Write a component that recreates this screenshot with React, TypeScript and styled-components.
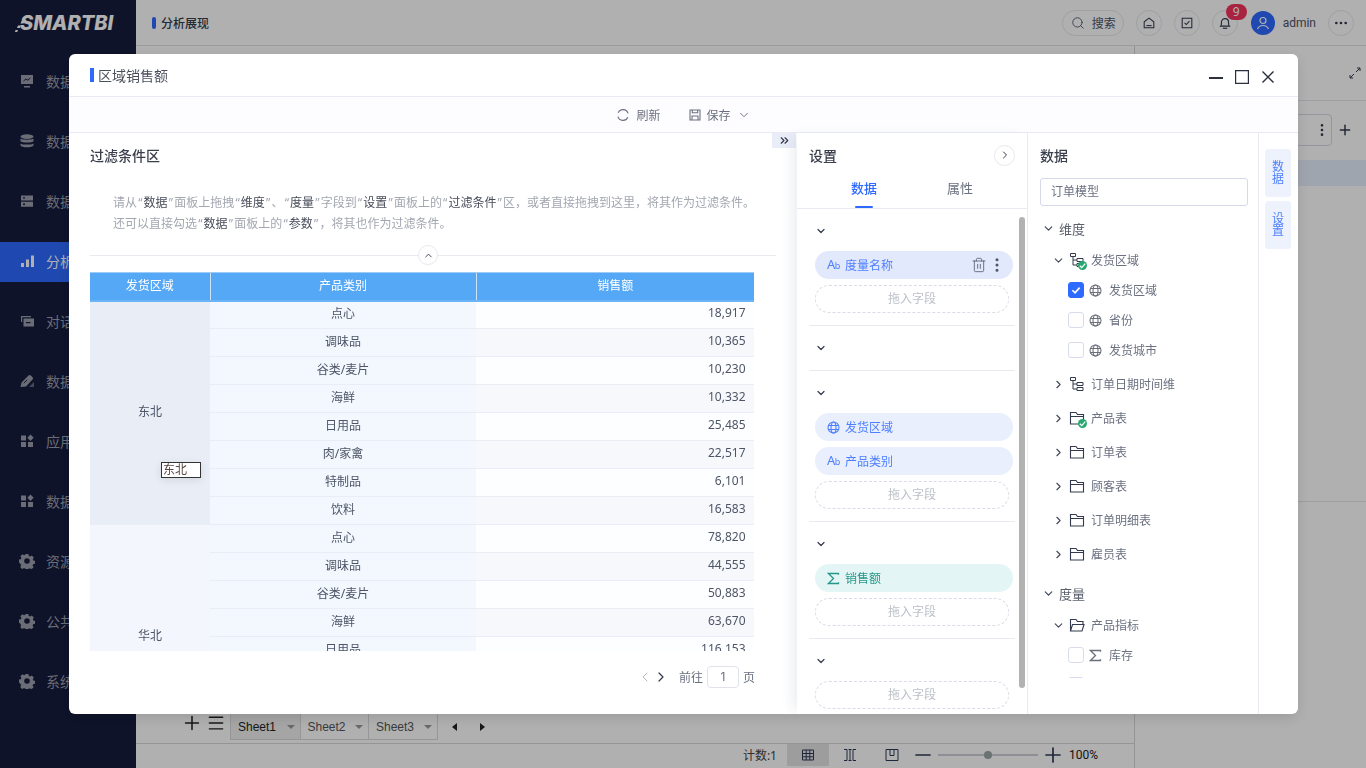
import React from 'react';
import styled, { createGlobalStyle } from 'styled-components';
import { ChevronDown, ChevronRight, ChevronLeft, ChevronUp, ChevronsRight, Search, Plus, Minus, Ellipsis, EllipsisVertical, Trash2, Menu } from 'lucide-react';

const GlobalStyle = createGlobalStyle`
  html, body {
    margin: 0;
    height: 100%;
    overflow: hidden;
  }
  body {
    font-family: "Noto Sans", "Noto Sans CJK SC", sans-serif;
    font-size: 12px;
    color: #4d5566;
    background: #fff;
  }
  #root {
    height: 100%;
  }
  * {
    box-sizing: border-box;
  }
`;

const Shell = styled.div`
  display: flex;
  height: 768px;
  width: 1366px;
  overflow: hidden;
`;

const Sidebar = styled.nav`
  width: 136px;
  flex: none;
  background: #161c3d;
  display: flex;
  flex-direction: column;
`;

const LogoBox = styled.div`
  height: 62px;
  display: flex;
  align-items: flex-start;
  padding: 12px 0 0 15px;
`;

const LogoText = styled.span`
  font-family: Inter, sans-serif;
  font-style: italic;
  font-weight: 800;
  font-size: 20px;
  line-height: 22px;
  color: #fff;
  margin-left: -5px;
`;

const NavList = styled.div`
  display: flex;
  flex-direction: column;
  gap: 20px;
`;

const NavItem = styled.div<{ $active?: boolean }>`
  height: 40px;
  display: flex;
  align-items: center;
  gap: 11px;
  padding: 0 0 2px 19px;
  font-size: 14px;
  white-space: nowrap;
  color: ${p => (p.$active ? '#fff' : '#9a9eab')};
  background: ${p => (p.$active ? '#2e6aff' : 'transparent')};
`;

const Main = styled.div`
  flex: 1;
  display: flex;
  flex-direction: column;
  min-width: 0;
`;

const TopBar = styled.header`
  height: 46px;
  flex: none;
  display: flex;
  align-items: center;
  padding: 0 0 0 16px;
  border-bottom: 1px solid #dfe1e6;
`;

const TopTitle = styled.div`
  display: flex;
  align-items: center;
  gap: 5px;
  font-weight: 500;
  color: #333a4d;
  flex: 1;
  &::before {
    content: '';
    width: 4px;
    height: 12px;
    border-radius: 2px;
    background: #2e6aff;
  }
`;

const TopActions = styled.div`
  display: flex;
  align-items: center;
`;

const SearchPill = styled.div`
  width: 62px;
  height: 26px;
  border: 1px solid #e6e8ee;
  border-radius: 13px;
  display: flex;
  align-items: center;
  gap: 7px;
  padding-left: 8px;
  color: #4d5566;
  margin-right: 12px;
`;

const RoundBtn = styled.div`
  width: 26px;
  height: 26px;
  border: 1px solid #e6e8ee;
  border-radius: 50%;
  display: flex;
  align-items: center;
  justify-content: center;
  color: #333a4d;
  margin-right: 12px;
  position: relative;
`;

const Badge = styled.span`
  position: absolute;
  left: 13px;
  top: -7px;
  width: 21px;
  height: 16px;
  border-radius: 8px;
  background: #f5325c;
  color: #fff;
  font-size: 12px;
  line-height: 16px;
  text-align: center;
`;

const Avatar = styled.div`
  width: 24px;
  height: 24px;
  border-radius: 50%;
  background: #2e6aff;
  color: #fff;
  display: flex;
  align-items: center;
  justify-content: center;
  margin-left: 1px;
  margin-right: 8px;
`;

const UserName = styled.span`
  font-family: Roboto, sans-serif;
  font-size: 12px;
  color: #4d5566;
  margin-right: 12px;
`;

const Work = styled.div`
  flex: 1;
  display: flex;
  min-height: 0;
`;

const Center = styled.div`
  flex: 1;
  display: flex;
  flex-direction: column;
  min-width: 0;
`;

const Canvas = styled.div`
  flex: 1;
`;

const SheetBar = styled.div`
  height: 30px;
  flex: none;
  display: flex;
  align-items: flex-start;
  padding-left: 45px;
  border-bottom: 1px solid #d8d8d8;
  color: #222;
`;

const SheetTools = styled.div`
  display: flex;
  align-items: center;
  gap: 3px;
  height: 18px;
  margin-right: 4px;
`;

const SheetTabs = styled.div`
  display: flex;
  height: 26px;
  border: 1px solid #dadada;
  border-top: none;
`;

const SheetTab = styled.div<{ $active?: boolean }>`
  width: 68.5px;
  display: flex;
  align-items: center;
  justify-content: space-between;
  padding: 0 5px 0 7px;
  font-family: "Liberation Sans", Arial, sans-serif;
  font-size: 12px;
  color: ${p => (p.$active ? '#222' : '#555')};
  background: ${p => (p.$active ? '#f0f0f0' : 'transparent')};
  & + & {
    border-left: 1px solid #dadada;
  }
  &::after {
    content: '';
    border-left: 4px solid transparent;
    border-right: 4px solid transparent;
    border-top: 4px solid #999;
  }
`;

const SheetArrows = styled.div`
  display: flex;
  align-items: center;
  gap: 23px;
  height: 26px;
  margin-left: 14px;
`;

const Arrow = styled.span<{ $dir: 'left' | 'right' }>`
  width: 0;
  height: 0;
  border-top: 4px solid transparent;
  border-bottom: 4px solid transparent;
  ${p => (p.$dir === 'left' ? 'border-right: 5px solid #222;' : 'border-left: 5px solid #222;')}
`;

const StatusBar = styled.div`
  height: 24px;
  flex: none;
  display: flex;
  align-items: center;
  justify-content: flex-end;
  color: #444;
  padding: 0 36px 2px 0;
`;

const CountLabel = styled.span`
  margin-right: 10px;
`;

const ViewBtn = styled.div<{ $active?: boolean }>`
  width: 42px;
  height: 22px;
  align-self: flex-start;
  display: flex;
  align-items: center;
  justify-content: center;
  background: ${p => (p.$active ? '#e4e4e4' : 'transparent')};
  color: #2d3a55;
`;

const ZoomOut = styled(Minus)`
  flex: none;
  margin-left: -2px;
`;

const ZoomTrack = styled.div`
  width: 100px;
  height: 2px;
  background: #ccd0d8;
  margin: 0 3px;
  display: flex;
  align-items: center;
  justify-content: center;
  &::after {
    content: '';
    width: 8px;
    height: 8px;
    border-radius: 50%;
    background: #9aa5a5;
    flex: none;
  }
`;

const ZoomValue = styled.span`
  font-family: Roboto, sans-serif;
  margin-left: 4px;
  color: #222;
`;

const SidePanel = styled.aside`
  width: 232px;
  flex: none;
  border-left: 1px solid #d8d8d8;
  display: flex;
  flex-direction: column;
  align-items: stretch;
  color: #333a4d;
`;

const SideHead = styled.div`
  height: 55px;
  border-bottom: 1px solid #e4e6ec;
  display: flex;
  align-items: center;
  justify-content: flex-end;
  padding-right: 5px;
`;

const SideInputRow = styled.div`
  display: flex;
  align-items: center;
  margin-top: 13px;
  padding-right: 13px;
  gap: 5px;
`;

const SideInput = styled.div`
  flex: 1;
  height: 32px;
  border: 1px solid #d5d9e4;
  border-radius: 4px;
  display: flex;
  align-items: center;
  justify-content: flex-end;
  padding-right: 1px;
`;

const SideRow = styled.div`
  height: 26px;
  margin-top: 14px;
  background: #e7effe;
  border-radius: 4px 0 0 4px;
`;

const SideRule = styled.div`
  margin-top: 315px;
  height: 1px;
  background: #e4e6ec;
`;

const Overlay = styled.div`
  position: fixed;
  inset: 0;
  background: rgba(0, 0, 0, 0.31);
`;

const Dialog = styled.section`
  position: absolute;
  left: 69px;
  top: 54px;
  width: 1229px;
  height: 660px;
  background: #fff;
  border-radius: 6px;
  box-shadow: 0 4px 14px rgba(0, 0, 0, 0.12);
  display: flex;
  flex-direction: column;
  overflow: hidden;
`;

const DialogHead = styled.div`
  height: 43px;
  flex: none;
  border-bottom: 1px solid #e8ebf3;
  display: flex;
  align-items: center;
  padding: 0 24px 0 21px;
`;

const DialogTitle = styled.div`
  flex: 1;
  display: flex;
  align-items: center;
  gap: 4px;
  font-size: 14px;
  color: #4a4f5c;
  &::before {
    content: '';
    width: 4px;
    height: 14px;
    background: #2e6aff;
  }
`;

const WindowBtns = styled.div`
  display: flex;
  align-items: center;
  gap: 12px;
  margin-top: 3px;
  color: #2b2f3e;
  svg {
    display: block;
  }
  svg:last-child {
    margin-left: 1px;
  }
`;

const DialogTools = styled.div`
  height: 36px;
  flex: none;
  border-bottom: 1px solid #e8ebf3;
  display: flex;
  align-items: center;
  justify-content: center;
  gap: 28px;
  background: #fdfdff;
`;

const ToolBtn = styled.div`
  display: flex;
  align-items: center;
  gap: 6px;
  color: #6b7180;
`;

const DialogBody = styled.div`
  flex: 1;
  display: flex;
  min-height: 0;
`;

const FilterArea = styled.div`
  width: 728px;
  flex: none;
  padding: 0 21px;
  position: relative;
  display: flex;
  flex-direction: column;
`;

const CollapseTab = styled.div`
  position: absolute;
  right: 1px;
  top: 0;
  width: 24px;
  height: 15px;
  background: #e9edf8;
  display: flex;
  align-items: center;
  justify-content: center;
  color: #333a4d;
`;

const AreaTitle = styled.h3`
  margin: 0;
  height: 46px;
  line-height: 46px;
  font-size: 14px;
  font-weight: 500;
  color: #3a3f4c;
`;

const Hint = styled.p`
  margin: 13px 0 0;
  padding-left: 23px;
  line-height: 21px;
  color: #a3a7b0;
  white-space: nowrap;
`;

const Quoted = styled.span`
  padding: 0 1.2px;
  b {
    font-weight: 400;
    color: #474c59;
    padding: 0 1.1px;
  }
`;

const FoldRule = styled.div`
  margin-top: 21px;
  height: 1px;
  background: #e8eaef;
  position: relative;
  display: flex;
  justify-content: center;
`;

const FoldBtn = styled.div`
  position: absolute;
  top: -10px;
  left: 328px;
  width: 20px;
  height: 20px;
  border: 1px solid #e6e8ee;
  border-radius: 50%;
  background: #fff;
  display: flex;
  align-items: center;
  justify-content: center;
  color: #333a4d;
`;

const TableBox = styled.div`
  margin-top: 16px;
  width: 664px;
  height: 379px;
  overflow: hidden;
  position: relative;
`;

const Grid = styled.table`
  width: 664px;
  table-layout: fixed;
  border-collapse: collapse;
`;

const Head = styled.th<{ $w: number }>`
  width: ${p => p.$w}px;
  height: 28px;
  padding: 0 0 2px;
  background: #55a8f5;
  color: #fff;
  font-weight: 400;
  border-left: 1px solid #cfe4fb;
  border-top: 1px solid #9ccbf8;
  border-bottom: 2px solid #6db4f6;
  &:first-child {
    border-left: none;
  }
`;

const AreaCell = styled.td<{ $tone: string }>`
  padding: 0 0 4px;
  text-align: center;
  background: ${p => p.$tone};
  border-bottom: 1px solid #e9edf5;
`;

const KindCell = styled.td`
  height: 28px;
  padding: 0 0 4px;
  text-align: center;
  background: #f3f7fe;
  border-bottom: 1px solid #e9edf5;
`;

const ValueCell = styled.td<{ $odd: boolean }>`
  padding: 0 8.5px 4px 0;
  text-align: right;
  background: ${p => (p.$odd ? '#f6f8fc' : '#fdfeff')};
  border-bottom: 1px solid #e9edf5;
`;

const CellEditor = styled.div`
  position: absolute;
  left: 71px;
  top: 190px;
  width: 40px;
  height: 16px;
  background: #fff;
  border: 1px solid #333;
  line-height: 14px;
  padding-left: 1px;
  color: #5a4a46;
  box-shadow: 0 2px 8px rgba(0, 0, 0, 0.1);
`;

const Pager = styled.div`
  width: 665px;
  height: 22px;
  margin-top: 15px;
  display: flex;
  align-items: center;
  justify-content: flex-end;
  color: #6b7180;
`;

const PagerArrow = styled.span<{ $off?: boolean }>`
  display: flex;
  color: ${p => (p.$off ? '#b4b8c2' : '#333a4d')};
`;

const PageInput = styled.div`
  width: 32px;
  height: 22px;
  border: 1px solid #e0e3ec;
  border-radius: 4px;
  margin: 0 4px;
  line-height: 20px;
  text-align: center;
  font-family: Inter, sans-serif;
`;

const PagerLabel = styled.span`
  margin-left: 10px;
`;

const Settings = styled.div`
  width: 231px;
  flex: none;
  border-right: 1px solid #e8ebf3;
  display: flex;
  flex-direction: column;
  box-shadow: -8px 0 12px -4px rgba(40, 60, 110, 0.09);
  position: relative;
  background: #fff;
`;

const PanelHead = styled.div`
  height: 46px;
  flex: none;
  display: flex;
  align-items: center;
  justify-content: space-between;
  padding: 0 12px 2px;
  font-size: 14px;
  font-weight: 500;
  color: #3a3f4c;
`;

const CircleBtn = styled.div`
  width: 21px;
  height: 21px;
  border: 1px solid #e6e8ee;
  border-radius: 50%;
  display: flex;
  align-items: center;
  justify-content: center;
  color: #333a4d;
`;

const TabRow = styled.div`
  height: 30px;
  flex: none;
  display: flex;
  border-bottom: 1px solid #e8ebf3;
`;

const PanelTab = styled.div<{ $active?: boolean }>`
  width: 96px;
  margin-left: ${p => (p.$active ? '19px' : '0')};
  text-align: center;
  font-size: 13px;
  line-height: 18px;
  position: relative;
  font-weight: ${p => (p.$active ? 500 : 400)};
  color: ${p => (p.$active ? '#2e6aff' : '#6b7180')};
  &::after {
    content: '';
    display: ${p => (p.$active ? 'block' : 'none')};
    position: absolute;
    left: 39px;
    bottom: 0;
    width: 18px;
    height: 2px;
    border-radius: 1px;
    background: #2e6aff;
  }
`;

const FieldScroll = styled.div`
  flex: 1;
  overflow: hidden;
  position: relative;
  padding: 0 12px;
`;

const Thumb = styled.div`
  position: absolute;
  left: 222px;
  top: 8px;
  width: 6px;
  height: 471px;
  border-radius: 3px;
  background: #b2b2b2;
`;

const Zone = styled.div<{ $empty?: boolean }>`
  border-bottom: 1px solid #e8eaef;
  padding: 0 0 ${p => (p.$empty ? '8px' : '12px')} 6px;
  display: flex;
  flex-direction: column;
  align-items: flex-start;
  gap: 6px;
`;

const ZoneHead = styled.div`
  height: 42px;
  margin-bottom: -6px;
  display: flex;
  align-items: center;
  padding-top: 2px;
  color: #333a4d;
`;

const pillColors = {
  hover: ['#4d7fff', '#e2e9fc'],
  blue: ['#4d7fff', '#e9effd'],
  green: ['#26978a', '#e3f6f5'],
};

const Pill = styled.div<{ $tone?: keyof typeof pillColors }>`
  width: 198px;
  height: 28px;
  flex: none;
  border-radius: 14px;
  padding: 0 7px 0 12px;
  display: flex;
  align-items: center;
  gap: 6px;
  color: ${p => pillColors[p.$tone ?? 'blue'][0]};
  background: ${p => pillColors[p.$tone ?? 'blue'][1]};
  svg {
    display: block;
    flex: none;
  }
`;

const PillLabel = styled.span`
  flex: 1;
`;

const PillTools = styled.div`
  display: flex;
  align-items: center;
  gap: 1px;
  color: #4d5566;
`;

const AbMark = styled.span`
  width: 12px;
  font-size: 13px;
  line-height: 14px;
  letter-spacing: -0.5px;
  white-space: nowrap;
  small {
    font-size: 9px;
  }
`;

const GlobeBox = styled.span`
  width: 12px;
  display: flex;
  justify-content: center;
`;

const DropZone = styled.div`
  width: 194px;
  height: 28px;
  flex: none;
  border: 1px dashed #d9dce8;
  border-radius: 14px;
  line-height: 26px;
  text-align: center;
  color: #bdc0c9;
`;

const DataPanel = styled.div`
  width: 231px;
  flex: none;
  border-right: 1px solid #e8ebf3;
  display: flex;
  flex-direction: column;
`;

const ModelInput = styled.div`
  margin: -1px 10px 0 12px;
  height: 28px;
  flex: none;
  border: 1px solid #d5d9e8;
  border-radius: 3px;
  line-height: 26px;
  padding-left: 10px;
  color: #6b7180;
`;

const Tree = styled.div`
  margin-top: 8px;
  height: 464px;
  overflow: hidden;
  padding-left: 12px;
`;

const TreeRow = styled.div<{ $indent?: number; $h?: number; $gap?: number }>`
  height: ${p => p.$h ?? 30}px;
  margin-top: ${p => p.$gap ?? 0}px;
  padding-left: ${p => p.$indent ?? 0}px;
  display: flex;
  align-items: center;
  color: #6b7180;
  white-space: nowrap;
`;

const RootRow = styled(TreeRow)`
  padding-bottom: 2px;
`;

const Caret = styled.span`
  width: 16px;
  display: flex;
  justify-content: center;
  margin-right: 3px;
  color: #3f4655;
`;

const RootLabel = styled.span`
  font-size: 13px;
  color: #5a5f6c;
`;

const NodeIcon = styled.span`
  width: 16px;
  height: 16px;
  display: flex;
  align-items: center;
  justify-content: center;
  position: relative;
  margin-right: 6px;
  color: #333a4d;
`;

const LeafIcon = styled(NodeIcon)`
  color: #6b6f7a;
`;

const OkDot = styled.span`
  position: absolute;
  right: -2px;
  bottom: -2px;
  width: 9px;
  height: 9px;
  border-radius: 50%;
  background: #27a86f;
  display: flex;
  color: #fff;
`;

const Check = styled.span<{ $on?: boolean }>`
  width: 16px;
  height: 16px;
  flex: none;
  margin-right: 3px;
  border-radius: 3px;
  border: 1px solid ${p => (p.$on ? '#2e6aff' : '#d8dcec')};
  background: ${p => (p.$on ? '#2e6aff' : '#fff')};
  color: #fff;
  display: flex;
  align-items: center;
  justify-content: center;
`;

const Rail = styled.div`
  flex: 1;
  padding: 16px 6px 0;
  display: flex;
  flex-direction: column;
  gap: 4px;
`;

const RailTab = styled.div`
  width: 26px;
  height: 48px;
  background: #edf2fd;
  border-radius: 3px;
  display: flex;
  align-items: center;
  justify-content: center;
  color: #4d7fff;
  text-align: center;
  line-height: 12px;
`;

type IconProps = { size?: number };

const Stroke: React.FC<{ size?: number; box?: number; w?: number; children: React.ReactNode }> = ({ size = 16, box = 16, w = 1.2, children }) => (
  <svg width={size} height={size} viewBox={`0 0 ${box} ${box}`} fill="none" stroke="currentColor" strokeWidth={w}>
    {children}
  </svg>
);

const Fill: React.FC<{ children: React.ReactNode }> = ({ children }) => (
  <svg width={16} height={16} viewBox="0 0 16 16" fill="currentColor">
    {children}
  </svg>
);

const IcoMonitor = () => <Fill><path d="M2 2h12v9H2zM5 13h6v1.4H5z" /><path d="M4.5 8l2.4-2 2 1.2 2.6-2.4" stroke="#161c3d" fill="none" /></Fill>;
const IcoDb = () => <Fill><ellipse cx="8" cy="3.6" rx="6.5" ry="2.4" /><path d="M1.5 5.6c1 1.6 12 1.6 13 0v2.6c-1 1.8-12 1.8-13 0zM1.5 10.4c1 1.6 12 1.6 13 0v2c-1 2.4-12 2.4-13 0z" /></Fill>;
const IcoServer = () => <Fill><path d="M2 2.4h12v5H2zM2 8.8h12v5H2z" /><path d="M4 4.2h2v1.4H4zM4 10.6h2V12H4z" fill="#161c3d" /></Fill>;
const IcoBars = () => <Fill><path d="M2 10h3v4H2zM7 6.5h3V14H7zM12 2.5h3V14h-3z" /></Fill>;
const IcoChat = () => <Fill><path d="M2 3h10v1.2H3.2V9H2z" /><path d="M4.5 5.5H15v8H4.5z" /><path d="M7 9h4.5v1.2H7z" fill="#161c3d" /></Fill>;
const IcoEdit = () => <Fill><path d="M1.5 14l1-4.5L9.5 2.5c.7-.7 1.6-.7 2.3 0l1.7 1.7c.7.7.7 1.6 0 2.3L7 13.5z" /><path d="M4.8 10.2l3.4-3.4" stroke="#161c3d" fill="none" /><path d="M10 14l5-5v5z" opacity=".6" /></Fill>;
const IcoApps = () => <Fill><path d="M2 2.5h5v5H2zM2 9h5v5H2zM9 9h5v5H9zM11.5 1.5l3.2 3.2-3.2 3.2-3.2-3.2z" /></Fill>;
const IcoGear = () => <Fill><path fillRule="evenodd" d="M6.6 1h2.8l.4 1.9 1.3.6 1.7-1 2 2-1 1.7.6 1.4 1.6.4v2.8l-1.9.4-.5 1.3 1 1.7-2 2-1.7-1-1.3.5-.5 1.8H6.6l-.4-1.9-1.3-.5-1.7 1-2-2 1-1.7-.6-1.4L0 9.4V6.6l1.9-.4.5-1.3-1-1.7 2-2 1.7 1 1.4-.6zM8 5.2a2.8 2.8 0 100 5.6 2.8 2.8 0 000-5.6z" /></Fill>;

const IcoHome: React.FC<IconProps> = () => <Stroke size={14}><path d="M2.5 13.5V6.6L8 2.4l5.5 4.2v6.9z" /><path d="M5 11h6" /></Stroke>;
const IcoTask: React.FC<IconProps> = () => <Stroke size={14}><path d="M2.5 2.500h11v11h-11z" /><path d="M5.200 7.800l2 2 3.600-4" /></Stroke>;
const IcoBell: React.FC<IconProps> = () => <Stroke size={14} w={1.3}><path d="M3 11.500c1-1 1-2.500 1-4.500 0-2.500 1.800-4 4-4s4 1.500 4 4c0 2 0 3.500 1 4.500z" /><path d="M5.500 14h5" /></Stroke>;
const IcoUser: React.FC<IconProps> = () => <Stroke size={18} box={18} w={1.2}><circle cx="9" cy="6.500" r="3" /><path d="M3.500 15c1-2.500 3-3.500 5.500-3.500s4.500 1 5.500 3.500" /></Stroke>;
const IcoExpand = () => <Stroke size={12} box={12} w={1}><path d="M7 5l4-4M8 1h3v3M5 7l-4 4M1 8v3h3" /></Stroke>;
const IcoRefresh = () => <Stroke size={14} w={1.3}><path d="M2.500 5.500A6 6 0 0113.800 6.200M13.500 10.500A6 6 0 012.200 9.800" /></Stroke>;
const IcoSave = () => <Stroke size={12} box={12} w={1.1}><path d="M1 1h10v10H1zM3.300 1v2.800h5.400V1M3 11V7h6v4" /></Stroke>;
const IcoGrid = () => <Stroke size={14} box={14} w={1}><path d="M1.500 2h11v10h-11zM1.500 5.500h11M1.500 8.800h11M5.200 2v10M8.800 2v10" /></Stroke>;
const IcoFreeze = () => <Stroke size={14} box={14} w={1}><path d="M1 1.500h3v11H1M13 1.500h-3v11h3M7 1v12M5.500 1.500h3M5.500 12.500h3" /></Stroke>;
const IcoSplit = () => <Stroke size={14} box={14} w={1}><path d="M1 1.500h12v11H1zM5 1.500v6h4v-6" /></Stroke>;
const IcoHier = () => <Stroke w={1}><path d="M1.500 1.500h5v3h-5zM4 4.500v8.500h4M4 8h4M8 6.500h6v3H8zM8 11.500h6v3H8z" /></Stroke>;
const IcoFolder = () => <Stroke w={1.1}><path d="M1.500 14V2.500h5.500l1.500 2h6V14zM1.500 6.500h13.500" /></Stroke>;
const IcoFolderOpen = () => <Stroke w={1.1}><path d="M1.500 14V2.500h5.500l1.500 2h5.500v3M1.500 14h11.500l2-6.500H3.500z" /></Stroke>;
const IcoGlobe = () => <Stroke size={13} box={13} w={1.1}><circle cx="6.500" cy="6.500" r="5.500" /><ellipse cx="6.500" cy="6.500" rx="2.500" ry="5.500" /><path d="M1 4.500h11M1 8.500h11" /></Stroke>;
const IcoSigma = () => <Stroke size={13} box={13} w={1.3}><path d="M11.500 2.800V1.500H1.500L6.500 6.500l-5 5h10v-1.300" /></Stroke>;
const IcoTick = ({ size = 10 }: IconProps) => <Stroke size={size} box={10} w={1.4}><path d="M2 5.200l2.200 2.200L8 3" /></Stroke>;

const navItems: [string, React.ReactNode][] = [
  ['数据门户', <IcoMonitor />],
  ['数据连接', <IcoDb />],
  ['数据准备', <IcoServer />],
  ['分析展现', <IcoBars />],
  ['对话分析', <IcoChat />],
  ['数据填报', <IcoEdit />],
  ['应用市场', <IcoApps />],
  ['数据挖掘', <IcoApps />],
  ['资源管理', <IcoGear />],
  ['公共设置', <IcoGear />],
  ['系统运维', <IcoGear />],
];

const tableGroups: { area: string; tone: string; rows: [string, string][] }[] = [
  {
    area: '东北',
    tone: '#e9edf6',
    rows: [
      ['点心', '18,917'], ['调味品', '10,365'], ['谷类/麦片', '10,230'], ['海鲜', '10,332'],
      ['日用品', '25,485'], ['肉/家禽', '22,517'], ['特制品', '6,101'], ['饮料', '16,583'],
    ],
  },
  {
    area: '华北',
    tone: '#f3f7fd',
    rows: [
      ['点心', '78,820'], ['调味品', '44,555'], ['谷类/麦片', '50,883'], ['海鲜', '63,670'],
      ['日用品', '116,153'], ['肉/家禽', '98,240'], ['特制品', '30,512'], ['饮料', '71,306'],
    ],
  },
];

const Logo = () => (
  <LogoBox>
    <svg width="10" height="22" viewBox="0 0 10 22" fill="#fff">
      <path d="M6.500 9h3l-1 2.500h-3zM3 13.500h3l-1 2.500H2zM.5 18h2.500l-.8 2H0z" />
    </svg>
    <LogoText>SMARTBI</LogoText>
  </LogoBox>
);

const Background = () => (
  <Shell>
    <Sidebar>
      <Logo />
      <NavList>
        {navItems.map(([label, icon], i) => (
          <NavItem key={label} $active={i === 3}>
            {icon}
            {label}
          </NavItem>
        ))}
      </NavList>
    </Sidebar>
    <Main>
      <TopBar>
        <TopTitle>分析展现</TopTitle>
        <TopActions>
          <SearchPill><Search size={14} strokeWidth={1.5} />搜索</SearchPill>
          <RoundBtn><IcoHome /></RoundBtn>
          <RoundBtn><IcoTask /></RoundBtn>
          <RoundBtn><IcoBell /><Badge>9</Badge></RoundBtn>
          <Avatar><IcoUser /></Avatar>
          <UserName>admin</UserName>
          <RoundBtn><Ellipsis size={16} /></RoundBtn>
        </TopActions>
      </TopBar>
      <Work>
        <Center>
          <Canvas />
          <SheetBar>
            <SheetTools>
              <Plus size={22} strokeWidth={1.7} />
              <Menu size={20} strokeWidth={1.7} />
            </SheetTools>
            <SheetTabs>
              <SheetTab $active>Sheet1</SheetTab>
              <SheetTab>Sheet2</SheetTab>
              <SheetTab>Sheet3</SheetTab>
            </SheetTabs>
            <SheetArrows>
              <Arrow $dir="left" />
              <Arrow $dir="right" />
            </SheetArrows>
          </SheetBar>
          <StatusBar>
            <CountLabel>计数:1</CountLabel>
            <ViewBtn $active><IcoGrid /></ViewBtn>
            <ViewBtn><IcoFreeze /></ViewBtn>
            <ViewBtn><IcoSplit /></ViewBtn>
            <ZoomOut size={24} strokeWidth={1.7} color="#2d3a55" />
            <ZoomTrack />
            <Plus size={24} strokeWidth={1.7} color="#2d3a55" />
            <ZoomValue>100%</ZoomValue>
          </StatusBar>
        </Center>
        <SidePanel>
          <SideHead><IcoExpand /></SideHead>
          <SideInputRow>
            <SideInput><EllipsisVertical size={16} /></SideInput>
            <Plus size={16} strokeWidth={2.2} />
          </SideInputRow>
          <SideRow />
          <SideRule />
        </SidePanel>
      </Work>
    </Main>
  </Shell>
);

const ReportTable = () => (
  <TableBox>
    <Grid>
      <thead>
        <tr>
          <Head $w={120}>发货区域</Head>
          <Head $w={266}>产品类别</Head>
          <Head $w={278}>销售额</Head>
        </tr>
      </thead>
      <tbody>
        {tableGroups.map(group =>
          group.rows.map(([kind, value], i) => (
            <tr key={group.area + kind}>
              {i === 0 && <AreaCell $tone={group.tone} rowSpan={group.rows.length}>{group.area}</AreaCell>}
              <KindCell>{kind}</KindCell>
              <ValueCell $odd={i % 2 === 1}>{value}</ValueCell>
            </tr>
          )),
        )}
      </tbody>
    </Grid>
    <CellEditor>东北</CellEditor>
  </TableBox>
);

const Term: React.FC<{ children: React.ReactNode }> = ({ children }) => (
  <Quoted>“<b>{children}</b>”</Quoted>
);

const FilterCanvas = () => (
  <FilterArea>
    <CollapseTab><ChevronsRight size={13} strokeWidth={2.2} /></CollapseTab>
    <AreaTitle>过滤条件区</AreaTitle>
    <Hint>
      请从<Term>数据</Term>面板上拖拽<Term>维度</Term>、<Term>度量</Term>字段到<Term>设置</Term>面板上的<Term>过滤条件</Term>区，或者直接拖拽到这里，将其作为过滤条件。
      <br />
      还可以直接勾选<Term>数据</Term>面板上的<Term>参数</Term>，将其也作为过滤条件。
    </Hint>
    <FoldRule>
      <FoldBtn><ChevronUp size={11} strokeWidth={2} /></FoldBtn>
    </FoldRule>
    <ReportTable />
    <Pager>
      <PagerArrow $off><ChevronLeft size={16} strokeWidth={1.5} /></PagerArrow>
      <PagerArrow><ChevronRight size={16} strokeWidth={1.8} /></PagerArrow>
      <PagerLabel>前往</PagerLabel>
      <PageInput>1</PageInput>
      页
    </Pager>
  </FilterArea>
);

const ZoneCaret = () => (
  <ZoneHead><ChevronDown size={12} strokeWidth={2.4} /></ZoneHead>
);

const Ab = () => <AbMark>A<small>b</small></AbMark>;

const SettingsPanel = () => (
  <Settings>
    <PanelHead>
      设置
      <CircleBtn><ChevronRight size={12} strokeWidth={2} /></CircleBtn>
    </PanelHead>
    <TabRow>
      <PanelTab $active>数据</PanelTab>
      <PanelTab>属性</PanelTab>
    </TabRow>
    <FieldScroll>
      <Zone>
        <ZoneCaret />
        <Pill $tone="hover">
          <Ab />
          <PillLabel>度量名称</PillLabel>
          <PillTools>
            <Trash2 size={16} strokeWidth={1.2} />
            <EllipsisVertical size={18} strokeWidth={2} />
          </PillTools>
        </Pill>
        <DropZone>拖入字段</DropZone>
      </Zone>
      <Zone $empty>
        <ZoneCaret />
      </Zone>
      <Zone>
        <ZoneCaret />
        <Pill><GlobeBox><IcoGlobe /></GlobeBox><PillLabel>发货区域</PillLabel></Pill>
        <Pill><Ab /><PillLabel>产品类别</PillLabel></Pill>
        <DropZone>拖入字段</DropZone>
      </Zone>
      <Zone>
        <ZoneCaret />
        <Pill $tone="green"><GlobeBox><IcoSigma /></GlobeBox><PillLabel>销售额</PillLabel></Pill>
        <DropZone>拖入字段</DropZone>
      </Zone>
      <Zone>
        <ZoneCaret />
        <DropZone>拖入字段</DropZone>
      </Zone>
      <Thumb />
    </FieldScroll>
  </Settings>
);

const Ok = () => <OkDot><IcoTick size={9} /></OkDot>;

const Branch: React.FC<{ label: string; icon: React.ReactNode; open?: boolean; h?: number; gap?: number }> = ({ label, icon, open, h = 34, gap }) => (
  <TreeRow $indent={10} $h={h} $gap={gap}>
    <Caret>{open ? <ChevronDown size={13} strokeWidth={2} /> : <ChevronRight size={13} strokeWidth={2} />}</Caret>
    <NodeIcon>{icon}</NodeIcon>
    {label}
  </TreeRow>
);

const Leaf: React.FC<{ label: string; icon: React.ReactNode; on?: boolean }> = ({ label, icon, on }) => (
  <TreeRow $indent={28}>
    <Check $on={on}>{on && <IcoTick size={12} />}</Check>
    <LeafIcon>{icon}</LeafIcon>
    {label}
  </TreeRow>
);

const RootNode: React.FC<{ label: string; gap?: number }> = ({ label, gap }) => (
  <RootRow $gap={gap}>
    <Caret><ChevronDown size={13} strokeWidth={2.2} /></Caret>
    <RootLabel>{label}</RootLabel>
  </RootRow>
);

const DataTree = () => (
  <DataPanel>
    <PanelHead>数据</PanelHead>
    <ModelInput>订单模型</ModelInput>
    <Tree>
      <RootNode label="维度" />
      <Branch label="发货区域" open h={30} gap={1} icon={<><IcoHier /><Ok /></>} />
      <Leaf label="发货区域" on icon={<IcoGlobe />} />
      <Leaf label="省份" icon={<IcoGlobe />} />
      <Leaf label="发货城市" icon={<IcoGlobe />} />
      <Branch label="订单日期时间维" gap={2} icon={<IcoHier />} />
      <Branch label="产品表" icon={<><IcoFolder /><Ok /></>} />
      <Branch label="订单表" icon={<IcoFolder />} />
      <Branch label="顾客表" icon={<IcoFolder />} />
      <Branch label="订单明细表" icon={<IcoFolder />} />
      <Branch label="雇员表" icon={<IcoFolder />} />
      <RootNode label="度量" gap={8} />
      <Branch label="产品指标" open h={30} gap={1} icon={<IcoFolderOpen />} />
      <Leaf label="库存" icon={<IcoSigma />} />
      <Leaf label="单价" icon={<IcoSigma />} />
    </Tree>
  </DataPanel>
);

export default function App() {
  return (
    <>
      <GlobalStyle />
      <Background />
      <Overlay>
        <Dialog>
          <DialogHead>
            <DialogTitle>区域销售额</DialogTitle>
            <WindowBtns>
              <Stroke size={14} box={14} w={2}><path d="M0 8h14" /></Stroke>
              <Stroke size={14} box={14} w={1.2}><path d="M.6.600h12.800v12.800H.6z" /></Stroke>
              <Stroke size={12} box={12} w={1.4}><path d="M.5.500l11 11M11.500.500l-11 11" /></Stroke>
            </WindowBtns>
          </DialogHead>
          <DialogTools>
            <ToolBtn><IcoRefresh />刷新</ToolBtn>
            <ToolBtn><IcoSave />保存<ChevronDown size={14} strokeWidth={1.6} /></ToolBtn>
          </DialogTools>
          <DialogBody>
            <FilterCanvas />
            <SettingsPanel />
            <DataTree />
            <Rail>
              <RailTab>数<br />据</RailTab>
              <RailTab>设<br />置</RailTab>
            </Rail>
          </DialogBody>
        </Dialog>
      </Overlay>
    </>
  );
}
